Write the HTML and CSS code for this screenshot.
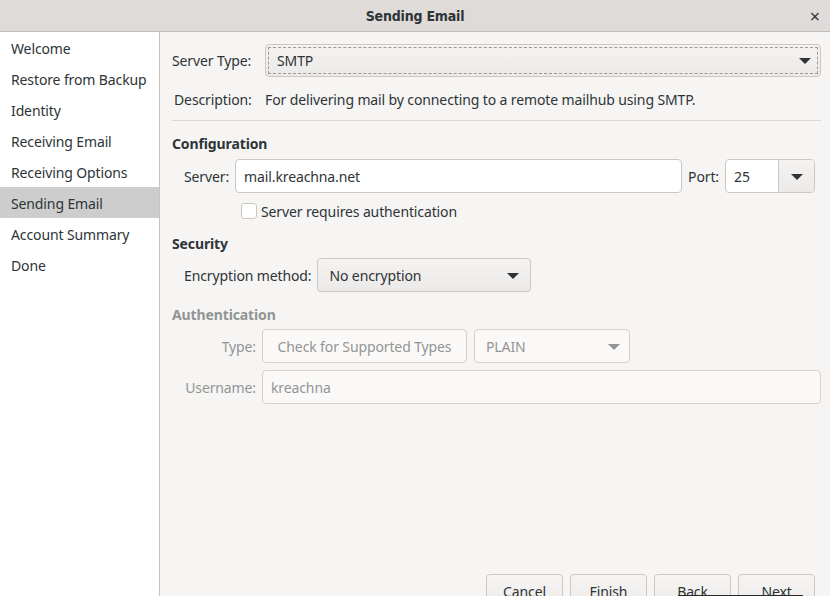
FILE: index.html
```html
<!DOCTYPE html>
<html>
<head>
<meta charset="utf-8">
<link rel="stylesheet" href="styles.css">
</head>
<body>
<div class="window">
  <header class="titlebar">
    <span class="title">Sending Email</span>
    <span class="close">×</span>
  </header>
  <div class="main">
    <nav class="sidebar">
      <div class="nav-item">Welcome</div>
      <div class="nav-item">Restore from Backup</div>
      <div class="nav-item">Identity</div>
      <div class="nav-item">Receiving Email</div>
      <div class="nav-item">Receiving Options</div>
      <div class="nav-item selected">Sending Email</div>
      <div class="nav-item">Account Summary</div>
      <div class="nav-item">Done</div>
    </nav>
    <section class="content">
      <div class="row-type">
        <span class="type-label">Server Type:</span>
        <div class="combo combo-focus"><span>SMTP</span><span class="arrow"></span></div>
      </div>
      <div class="row-desc">
        <span class="desc-label">Description:</span>
        <span>For delivering mail by connecting to a remote mailhub using SMTP.</span>
      </div>
      <div class="separator"></div>

      <h3 class="heading heading-conf">Configuration</h3>
      <div class="row-server">
        <span class="lbl">Server:</span>
        <div class="entry entry-server">mail.kreachna.net</div>
        <span class="lbl">Port:</span>
        <div class="spin"><span class="spin-val">25</span><span class="spin-btn"><span class="arrow"></span></span></div>
      </div>
      <div class="row-check">
        <span class="checkbox"></span>
        <span>Server requires authentication</span>
      </div>

      <h3 class="heading heading-sec">Security</h3>
      <div class="row-enc">
        <span class="lbl">Encryption method:</span>
        <div class="combo combo-enc"><span>No encryption</span><span class="arrow"></span></div>
      </div>

      <h3 class="heading heading-auth disabled">Authentication</h3>
      <div class="auth-grid disabled">
        <span class="auth-lbl">Type:</span>
        <div class="auth-type">
          <div class="btn-dis">Check for Supported Types</div>
          <div class="combo combo-dis"><span>PLAIN</span><span class="arrow arrow-dis"></span></div>
        </div>
        <span class="auth-lbl">Username:</span>
        <div class="entry entry-dis">kreachna</div>
      </div>

      <div class="buttons">
        <div class="btn">Cancel</div>
        <div class="btn">Finish</div>
        <div class="btn">Back</div>
        <div class="btn">Next</div>
      </div>
    </section>
  </div>
  <div class="tip-edge"></div>
</div>
</body>
</html>
```

FILE: styles.css
```css
html, body {
  margin: 0;
  padding: 0;
  overflow: hidden;
  width: 830px;
  height: 596px;
}
body {
  font-family: "Noto Sans", "DejaVu Sans", sans-serif;
  font-size: 14px;
  letter-spacing: -0.12px;
  color: #2e3436;
  background: #f6f5f4;
}
.window {
  position: relative;
  width: 830px;
  height: 612px;
  display: flex;
  flex-direction: column;
}
.titlebar {
  height: 31px;
  flex: none;
  background: #dfdbd8;
  border-bottom: 1px solid #c0bbb6;
  display: flex;
  align-items: center;
  justify-content: center;
  position: relative;
}
.title {
  font-family: "DejaVu Sans Condensed", "DejaVu Sans", sans-serif;
  font-weight: bold;
  font-size: 14px;
  color: #2e3436;
  letter-spacing: -0.2px;
}
.close {
  position: absolute;
  right: 10px;
  top: 4px;
  font-size: 18px;
  color: #2e3436;
}
.main {
  flex: 1;
  display: flex;
  min-height: 0;
}
.sidebar {
  width: 159px;
  flex: none;
  background: #ffffff;
  border-right: 1px solid #c8c3be;
}
.nav-item {
  height: 31px;
  line-height: 33px;
  padding-left: 11px;
  white-space: nowrap;
}
.nav-item.selected {
  background: #cdcdcd;
}
.content {
  flex: 1;
  display: flex;
  flex-direction: column;
  padding: 12px 9px 4px 12px;
  min-width: 0;
}
.row-type {
  display: flex;
  align-items: center;
  height: 33px;
}
.type-label {
  width: 93px;
  flex: none;
}
.combo {
  box-sizing: border-box;
  height: 34px;
  border: 1px solid #cdc7c2;
  border-radius: 4px;
  background: linear-gradient(#f4f3f2, #eceae8);
  display: flex;
  align-items: center;
  justify-content: space-between;
  padding: 0 9px 0 11px;
}
.combo-focus {
  flex: 1;
  height: 33px;
  outline: 1px dashed #9c9a98;
  outline-offset: -4px;
}
.arrow {
  width: 0;
  height: 0;
  border-left: 6px solid transparent;
  border-right: 6px solid transparent;
  border-top: 6px solid #2e3436;
  margin-top: 1px;
}
.row-desc {
  display: flex;
  align-items: center;
  height: 22px;
  margin-top: 11px;
}
.desc-label {
  width: 91px;
  padding-left: 2px;
  flex: none;
}
.separator {
  height: 1px;
  background: #dcd8d5;
  margin-top: 10px;
}
.heading {
  margin: 12px 0 0;
  font-size: 14px;
  font-weight: bold;
  height: 20px;
  line-height: 20px;
}
.heading-conf { margin-top: 13px; }
.heading-sec { margin-top: 15px; }
.heading-auth { margin-top: 13px; }
.row-server {
  display: flex;
  align-items: center;
  gap: 6px;
  margin-top: 5px;
  padding-left: 12px;
  padding-right: 6px;
}
.entry {
  box-sizing: border-box;
  height: 34px;
  border: 1px solid #cdc7c2;
  border-radius: 4px;
  background: #ffffff;
  display: flex;
  align-items: center;
  padding: 0 8px;
}
.entry-server {
  flex: 1;
}
.spin {
  box-sizing: border-box;
  width: 90px;
  height: 34px;
  border: 1px solid #cdc7c2;
  border-radius: 4px;
  background: #ffffff;
  display: flex;
  overflow: hidden;
}
.spin-val {
  flex: 1;
  display: flex;
  align-items: center;
  padding-left: 8px;
}
.spin-btn {
  width: 35px;
  border-left: 1px solid #cdc7c2;
  background: linear-gradient(#f4f3f2, #eceae8);
  display: flex;
  align-items: center;
  justify-content: center;
}
.row-check {
  display: flex;
  align-items: center;
  gap: 4px;
  margin-top: 10px;
  padding-left: 69px;
  height: 16px;
}
.checkbox {
  box-sizing: border-box;
  width: 16px;
  height: 16px;
  border: 1px solid #cdc7c2;
  border-radius: 3px;
  background: #ffffff;
}
.row-enc {
  display: flex;
  align-items: center;
  gap: 6px;
  margin-top: 4px;
  padding-left: 12px;
}
.combo-enc {
  width: 214px;
  padding-left: 11px;
  padding-right: 11px;
}
.disabled { color: #929595; }
.auth-grid {
  display: grid;
  grid-template-columns: 72px 1fr;
  column-gap: 6px;
  row-gap: 7px;
  align-items: center;
  margin-top: 4px;
  padding-left: 12px;
}
.auth-lbl {
  text-align: right;
}
.auth-type {
  display: flex;
  gap: 7px;
}
.btn-dis {
  box-sizing: border-box;
  width: 205px;
  height: 34px;
  border: 1px solid #d5d0cc;
  border-radius: 4px;
  background: #faf9f8;
  display: flex;
  align-items: center;
  justify-content: center;
}
.combo-dis {
  width: 156px;
  background: #faf9f8;
  border-color: #d5d0cc;
}
.arrow-dis {
  border-top-color: #929595;
}
.entry-dis {
  background: #faf9f8;
  border-color: #d5d0cc;
  padding-left: 8px;
}
.buttons {
  margin-top: auto;
  display: flex;
  justify-content: flex-end;
  gap: 7px;
  padding-right: 6px;
}
.btn {
  box-sizing: border-box;
  width: 77px;
  height: 34px;
  border: 1px solid #cdc7c2;
  border-radius: 4px;
  background: linear-gradient(#f6f5f4, #edebe9);
  display: flex;
  align-items: center;
  justify-content: center;
}
.tip-edge {
  position: absolute;
  left: 678px;
  top: 595px;
  width: 125px;
  height: 2px;
  background: #2a2a2a;
}
```
